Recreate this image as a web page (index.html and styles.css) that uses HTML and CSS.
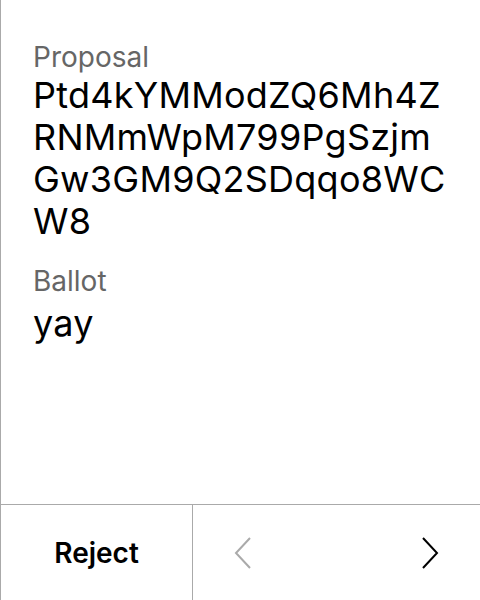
FILE: index.html
```html
<!DOCTYPE html>
<html>
<head>
<meta charset="utf-8">
<link rel="stylesheet" href="styles.css">
</head>
<body>
<div class="screen">
  <main class="content">
    <div class="field">
      <div class="label">Proposal</div>
      <div class="value">Ptd4kYMModZQ6Mh4ZRNMmWpM799PgSzjmGw3GM9Q2SDqqo8WCW8</div>
    </div>
    <div class="field">
      <div class="label">Ballot</div>
      <div class="value vote">yay</div>
    </div>
  </main>
  <footer class="footer">
    <button class="reject">Reject</button>
    <div class="nav">
      <button class="nav-btn disabled" aria-label="Previous">
        <svg width="18" height="32" viewBox="0 0 18 32"><path d="M16 1 L2 16 L16 31" fill="none" stroke="currentColor" stroke-width="2"/></svg>
      </button>
      <button class="nav-btn" aria-label="Next">
        <svg width="18" height="32" viewBox="0 0 18 32"><path d="M2 1 L16 16 L2 31" fill="none" stroke="currentColor" stroke-width="2"/></svg>
      </button>
    </div>
  </footer>
</div>
</body>
</html>
```

FILE: styles.css
```css
* { box-sizing: border-box; }
html, body { margin: 0; padding: 0; background: #fff; }
body { font-family: Inter, "Noto Sans", sans-serif; color: #000; }
.screen {
  width: 480px;
  height: 600px;
  border-left: 1px solid #aaa;
  display: flex;
  flex-direction: column;
}
.content {
  flex: 1;
  padding: 40px 32px 0 32px;
}
.field { margin-bottom: 22px; }
.label {
  font-size: 28px;
  line-height: 34px;
  color: #666;
}
.value {
  font-size: 36px;
  line-height: 42px;
  letter-spacing: 0.25px;
  word-break: break-all;
}
.vote { margin-top: 4px; }
.footer {
  height: 96px;
  border-top: 1px solid #aaa;
  display: grid;
  grid-template-columns: 192px 1fr;
}
.reject {
  border: 0;
  border-right: 1px solid #aaa;
  background: none;
  font-family: inherit;
  font-size: 28px;
  font-weight: 600;
  color: #000;
  padding: 0;
}
.nav {
  display: flex;
  justify-content: space-between;
}
.nav-btn {
  width: 100px;
  border: 0;
  background: none;
  padding: 0;
  color: #000;
  display: flex;
  align-items: center;
  justify-content: center;
}
.nav-btn.disabled { color: #aaa; }
```
